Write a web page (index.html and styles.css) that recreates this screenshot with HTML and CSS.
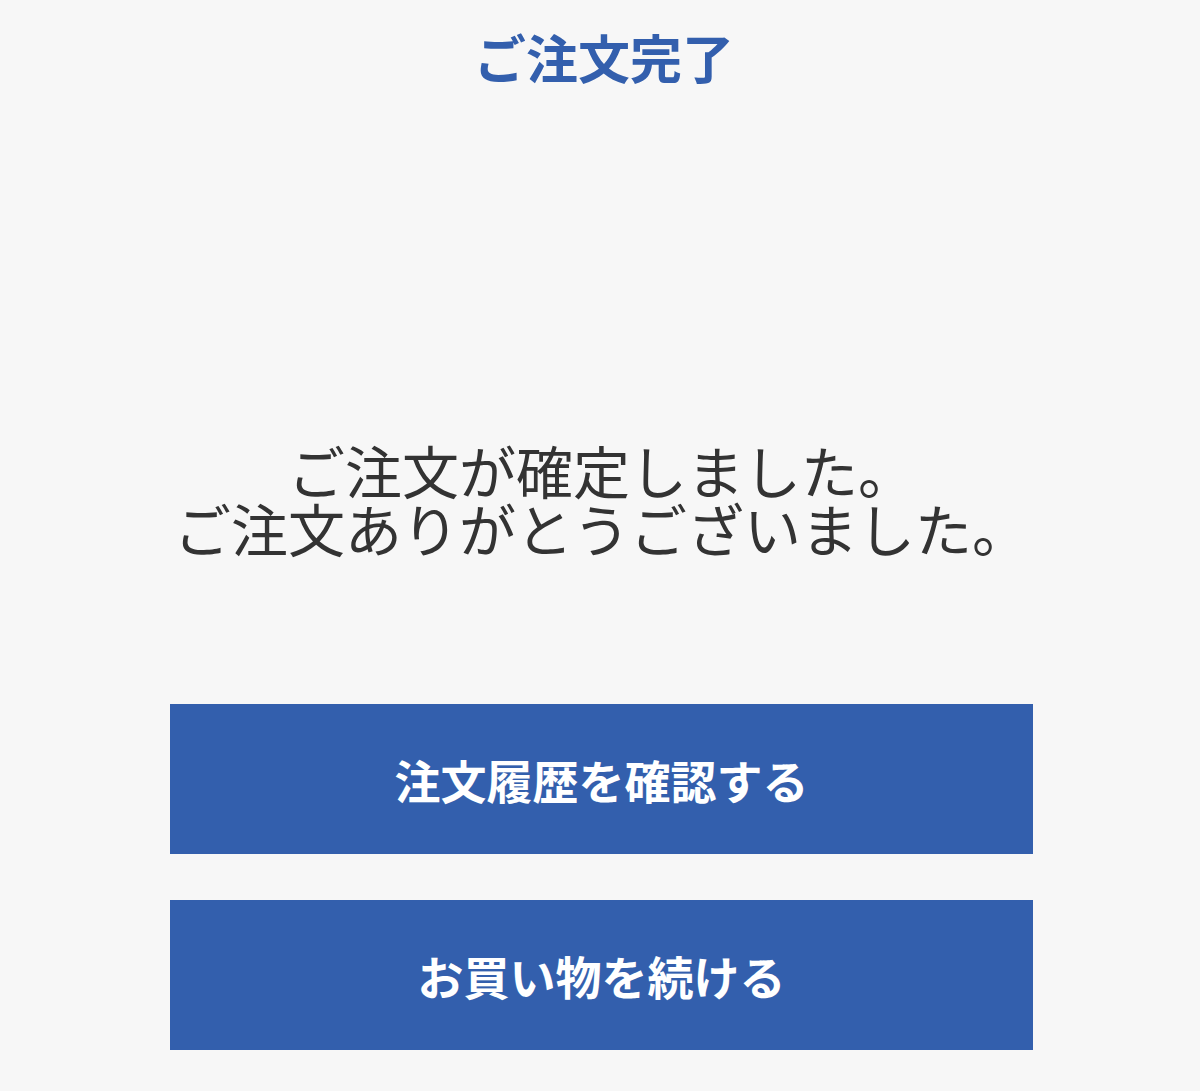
FILE: index.html
```html
<!DOCTYPE html>
<html lang="ja">
<head>
    <meta charset="UTF-8">
    <meta name="viewport" content="width=device-width, initial-scale=1.0">
    <title>ご注文完了</title>
    <link rel="stylesheet" href="styles.css">
</head>
<body>
    <header class="header">
        <h1 class="title">ご注文完了</h1>
    </header>
    <main class="container">
        <p class="message">ご注文が確定しました。<br>ご注文ありがとうございました。</p>
        <div class="actions">
            <button class="button" onclick="window.location.href='./history'">注文履歴を確認する</button>
            <button class="button" onclick="window.location.href='./'">お買い物を続ける</button>
        </div>
    </main>
</body>
</html>
```

FILE: styles.css
```css
body {
    font-family: "Noto Sans CJK JP", "Noto Sans", sans-serif;
    background: #f7f7f7;
    margin: 0;
    color: #333333;
}
.header {
    height: 114px;
    padding-left: 8px;
    display: flex;
    justify-content: center;
    align-items: center;
}
.title {
    margin: 0;
    font-size: 52px;
    line-height: 1;
    font-weight: bold;
    color: #335fad;
}
.container {
    width: 863px;
    margin: 0 auto;
    padding-left: 3px;
}
.message {
    margin: 326px 0 0;
    text-align: center;
    font-size: 57px;
    line-height: 58px;
    font-weight: normal;
}
.actions {
    margin-top: 148px;
    display: flex;
    flex-direction: column;
    gap: 46px;
}
.button {
    display: block;
    width: 100%;
    height: 150px;
    background: #335fad;
    color: #ffffff;
    border: none;
    border-radius: 0;
    font-family: inherit;
    font-size: 46px;
    font-weight: bold;
    cursor: pointer;
}
.button:hover {
    background: #2c549c;
}
```
